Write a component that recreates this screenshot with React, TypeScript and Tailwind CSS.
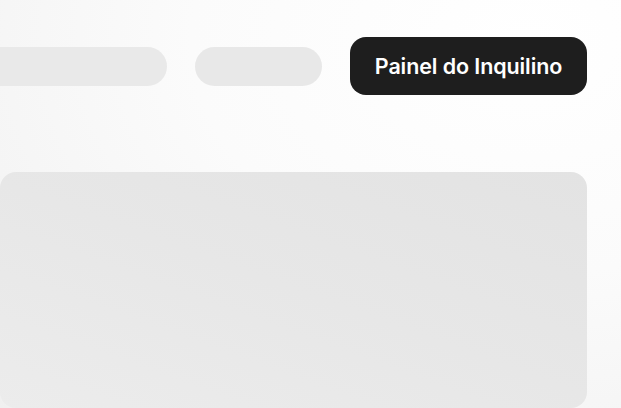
export default function App() {
  return (
    <div
      className="w-[621px] h-[408px] overflow-hidden bg-[radial-gradient(ellipse_at_85%_10%,#ffffff_0%,#fbfbfb_45%,#f0f0f0_100%)]"
      style={{ fontFamily: "Inter, 'Noto Sans', sans-serif" }}
    >
      {/* Top nav */}
      <div className="flex items-center justify-end gap-[28px] pt-[37px] pr-[34px]">
        <div className="h-[39px] w-[220px] shrink-0 rounded-full bg-[#e9e9e9]" />
        <div className="h-[39px] w-[127px] shrink-0 rounded-full bg-[#e8e8e8]" />
        <button className="h-[58px] w-[237px] shrink-0 rounded-[16px] bg-[#1e1e1e] text-[21.5px] font-semibold tracking-[-0.1px] text-white">
          Painel do Inquilino
        </button>
      </div>

      {/* Main card */}
      <div className="mt-[77px] mr-[34px] h-[236px] rounded-2xl bg-[linear-gradient(200deg,#e3e3e3_0%,#e7e7e7_50%,#ececec_100%)]" />
    </div>
  );
}
